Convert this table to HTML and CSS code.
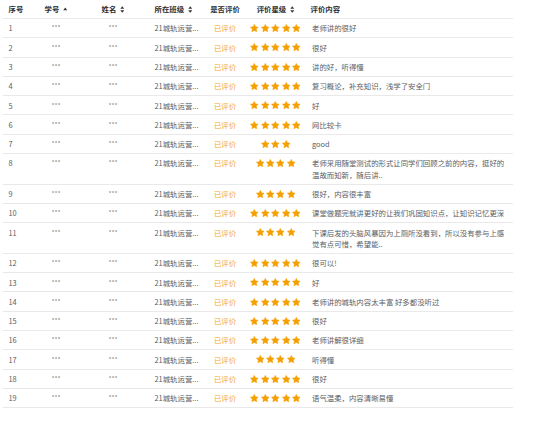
FILE: index.html
```html
<!DOCTYPE html>
<html lang="zh">
<head>
<meta charset="utf-8">
<link rel="stylesheet" href="styles.css">
</head>
<body>
<svg width="0" height="0" class="defs">
  <defs>
    <symbol id="star" viewBox="0 0 24 24"><path d="M12 1.2l3.3 6.8 7.5 1-5.4 5.2 1.3 7.4L12 18.1l-6.7 3.5 1.3-7.4-5.4-5.2 7.5-1z" stroke-linejoin="round" stroke-width="1.6" stroke="currentColor"/></symbol>
    <symbol id="sort" viewBox="0 0 6 10"><path d="M3 0.3L5.8 4H0.2z"/><path d="M3 9.7L5.8 6H0.2z"/></symbol>
    <symbol id="asc" viewBox="0 0 6 10"><path d="M3 2.3L5.8 6H0.2z"/></symbol>
  </defs>
</svg>
<table class="grid">
  <colgroup>
    <col class="c1"><col class="c2"><col class="c3"><col class="c4"><col class="c5"><col class="c6"><col class="c7">
  </colgroup>
  <thead>
    <tr>
      <th>序号</th>
      <th class="ctr">学号 <svg class="ic"><use href="#asc"/></svg></th>
      <th class="ctr">姓名 <svg class="ic"><use href="#sort"/></svg></th>
      <th>所在班级 <svg class="ic"><use href="#sort"/></svg></th>
      <th class="ctr">是否评价</th>
      <th class="ctr">评价星级 <svg class="ic"><use href="#sort"/></svg></th>
      <th>评价内容</th>
    </tr>
  </thead>
  <tbody id="rows"></tbody>
</table>
<script src="app.js"></script>
</body>
</html>
```
FILE: app.js
```js
const data = [
  [5, "老师讲的很好"],
  [5, "很好"],
  [5, "讲的好，听得懂"],
  [5, "复习概论，补充知识，浅学了安全门"],
  [5, "好"],
  [5, "网比较卡"],
  [3, "good"],
  [4, "老师采用随堂测试的形式让同学们回顾之前的内容，挺好的温故而知新，随后讲.."],
  [4, "很好，内容很丰富"],
  [5, "课堂做题完就讲更好的让我们巩固知识点，让知识记忆更深"],
  [4, "下课后发的头脑风暴因为上厕所没看到，所以没有参与上感觉有点可惜，希望能.."],
  [5, "很可以!"],
  [5, "好"],
  [5, "老师讲的城轨内容太丰富 好多都没听过"],
  [5, "很好"],
  [5, "老师讲解很详细"],
  [4, "听得懂"],
  [5, "很好"],
  [5, "语气温柔，内容清晰易懂"]
];
const tb = document.getElementById("rows");
data.forEach((d, i) => {
  const tr = document.createElement("tr");
  let stars = "";
  for (let k = 0; k < d[0]; k++) stars += '<svg class="star"><use href="#star"/></svg>';
  tr.innerHTML =
    `<td>${i + 1}</td>` +
    `<td class="ctr mask">***</td>` +
    `<td class="ctr mask">***</td>` +
    `<td>21城轨运营...</td>` +
    `<td class="ctr done">已评价</td>` +
    `<td class="ctr"><span class="rate">${stars}</span></td>` +
    `<td class="txt">${d[1]}</td>`;
  tb.appendChild(tr);
});
```
FILE: styles.css
```css
html, body {
  margin: 0;
  padding: 0;
  background: #fff;
}
body {
  font-family: "Noto Sans CJK SC", "Noto Sans", sans-serif;
  font-size: 7.4px;
  color: #5a5d63;
}
.defs {
  position: absolute;
  width: 0;
  height: 0;
}
.grid {
  margin-left: 3px;
  width: 510px;
  border-collapse: collapse;
  table-layout: fixed;
}
.c1 { width: 32px; }
.c2 { width: 42px; }
.c3 { width: 72px; }
.c4 { width: 55px; }
.c5 { width: 42px; }
.c6 { width: 59px; }
.c7 { width: 208px; }
th, td {
  padding: 3.45px 0 3.45px 5.5px;
  line-height: 11.4px;
  text-align: left;
  vertical-align: top;
  border-bottom: 1px solid #e9e9e9;
  white-space: nowrap;
  overflow: hidden;
}
th {
  font-weight: bold;
  color: #2b2d31;
  padding-top: 3.3px;
  padding-bottom: 3.3px;
}
th.ctr, td.ctr {
  text-align: center;
  padding-left: 0;
}
.ic {
  width: 4.5px;
  height: 7px;
  fill: #333;
  vertical-align: -0.5px;
  margin-left: 2px;
}
.mask {
  color: #888;
  font-size: 6.5px;
}
.done {
  color: #f5a623;
}
.rate {
  display: inline-flex;
  gap: 1.8px;
  vertical-align: top;
  padding-top: 1.7px;
  color: #f5a000;
}
.star {
  width: 8.6px;
  height: 8.6px;
  fill: #f5a000;
  display: block;
}
.txt {
  white-space: normal;
  padding-right: 8px;
  padding-left: 7px;
}
```
